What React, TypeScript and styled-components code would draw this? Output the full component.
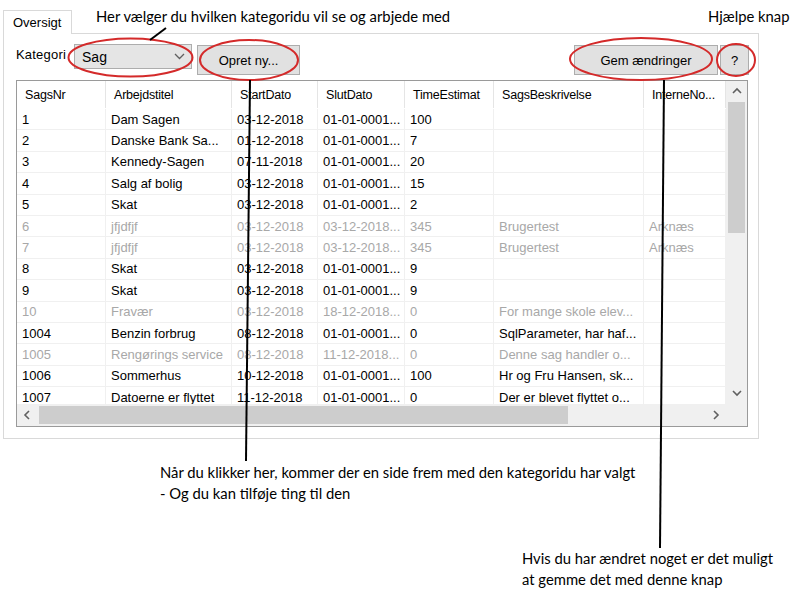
import React from 'react';
import styled, { createGlobalStyle } from 'styled-components';

const GlobalStyle = createGlobalStyle`
  html, body {
    margin: 0;
    padding: 0;
    background: #ffffff;
  }
  * {
    box-sizing: border-box;
  }
`;

// kolonnebredder i griddet
const COLS = [89, 126, 86, 87, 89, 150, 82];
const ROW_H = 21.4;

type SagRow = {
  nr: string;
  titel: string;
  start: string;
  slut: string;
  estimat: string;
  beskrivelse: string;
  noter: string;
  lukket?: boolean;
};

const headers = ['SagsNr', 'Arbejdstitel', 'StartDato', 'SlutDato', 'TimeEstimat', 'SagsBeskrivelse', 'InterneNo...'];

const rows: SagRow[] = [
  { nr: '1', titel: 'Dam Sagen', start: '03-12-2018', slut: '01-01-0001...', estimat: '100', beskrivelse: '', noter: '' },
  { nr: '2', titel: 'Danske Bank Sa...', start: '01-12-2018', slut: '01-01-0001...', estimat: '7', beskrivelse: '', noter: '' },
  { nr: '3', titel: 'Kennedy-Sagen', start: '07-11-2018', slut: '01-01-0001...', estimat: '20', beskrivelse: '', noter: '' },
  { nr: '4', titel: 'Salg af bolig', start: '03-12-2018', slut: '01-01-0001...', estimat: '15', beskrivelse: '', noter: '' },
  { nr: '5', titel: 'Skat', start: '03-12-2018', slut: '01-01-0001...', estimat: '2', beskrivelse: '', noter: '' },
  { nr: '6', titel: 'jfjdfjf', start: '03-12-2018', slut: '03-12-2018...', estimat: '345', beskrivelse: 'Brugertest', noter: 'Arknæs', lukket: true },
  { nr: '7', titel: 'jfjdfjf', start: '03-12-2018', slut: '03-12-2018...', estimat: '345', beskrivelse: 'Brugertest', noter: 'Arknæs', lukket: true },
  { nr: '8', titel: 'Skat', start: '03-12-2018', slut: '01-01-0001...', estimat: '9', beskrivelse: '', noter: '' },
  { nr: '9', titel: 'Skat', start: '03-12-2018', slut: '01-01-0001...', estimat: '9', beskrivelse: '', noter: '' },
  { nr: '10', titel: 'Fravær', start: '03-12-2018', slut: '18-12-2018...', estimat: '0', beskrivelse: 'For mange skole elev...', noter: '', lukket: true },
  { nr: '1004', titel: 'Benzin forbrug', start: '08-12-2018', slut: '01-01-0001...', estimat: '0', beskrivelse: 'SqlParameter, har haf...', noter: '' },
  { nr: '1005', titel: 'Rengørings service', start: '08-12-2018', slut: '11-12-2018...', estimat: '0', beskrivelse: 'Denne sag handler o...', noter: '', lukket: true },
  { nr: '1006', titel: 'Sommerhus', start: '10-12-2018', slut: '01-01-0001...', estimat: '100', beskrivelse: 'Hr og Fru Hansen, sk...', noter: '' },
  { nr: '1007', titel: 'Datoerne er flyttet', start: '11-12-2018', slut: '01-01-0001...', estimat: '0', beskrivelse: 'Der er blevet flyttet o...', noter: '' },
];

const Chevron = ({ dir }: { dir: 'up' | 'down' | 'left' | 'right' }) => {
  const pts = {
    up: '1,6 5,2 9,6',
    down: '1,2 5,6 9,2',
    left: '6,1 2,5 6,9',
    right: '3,1 7,5 3,9',
  }[dir];
  return (
    <svg width='10' height='10' viewBox='0 0 10 10'>
      <polyline points={pts} fill='none' stroke='#606060' strokeWidth='1.6' />
    </svg>
  );
};

const App = () => {
  return (
    <Canvas>
      <GlobalStyle />
      <TabControl>
        <TabStrip>
          <Tab>Oversigt</Tab>
        </TabStrip>
        <TabPage>
          <Toolbar>
            <Label>Kategori</Label>
            <Combo>
              <span>Sag</span>
              <svg width='11' height='7' viewBox='0 0 11 7'>
                <polyline points='1,1 5.5,5.5 10,1' fill='none' stroke='#606060' strokeWidth='1.3' />
              </svg>
            </Combo>
            <Button $width={103}>Opret ny...</Button>
            <Spacer />
            <Button $width={144}>Gem ændringer</Button>
            <Button $width={29}>?</Button>
          </Toolbar>

          <Grid>
            <DataArea>
              <Row $header>
                {headers.map((h) => (
                  <HeaderCell key={h}>{h}</HeaderCell>
                ))}
              </Row>
              {rows.map((r) => (
                <Row key={r.nr}>
                  {[r.nr, r.titel, r.start, r.slut, r.estimat, r.beskrivelse, r.noter].map((v, i) => (
                    <Cell key={i} $muted={r.lukket}>
                      {v}
                    </Cell>
                  ))}
                </Row>
              ))}
            </DataArea>

            <VScroll>
              <ArrowBtn>
                <Chevron dir='up' />
              </ArrowBtn>
              <VTrack>
                <VThumb />
              </VTrack>
              <ArrowBtn>
                <Chevron dir='down' />
              </ArrowBtn>
            </VScroll>

            <HScroll>
              <ArrowBtn>
                <Chevron dir='left' />
              </ArrowBtn>
              <HTrack>
                <HThumb />
              </HTrack>
              <ArrowBtn>
                <Chevron dir='right' />
              </ArrowBtn>
            </HScroll>
            <Corner />
          </Grid>
        </TabPage>
      </TabControl>

      {/* forklaringer lagt oven på skærmbilledet */}
      <Note $x={96} $y={6}>Her vælger du hvilken kategoridu vil se og arbjede med</Note>
      <Note $x={708} $y={6}>Hjælpe knap</Note>
      <Note $x={160} $y={462}>
        Når du klikker her, kommer der en side frem med den kategoridu har valgt
        <br />- Og du kan tilføje ting til den
      </Note>
      <Note $x={522} $y={548}>
        Hvis du har ændret noget er det muligt
        <br />
        at gemme det med denne knap
      </Note>

      <Overlay width='800' height='600' viewBox='0 0 800 600'>
        <g fill='none' stroke='#d42a2a' strokeWidth='2'>
          <ellipse cx='130.5' cy='57.5' rx='62' ry='19' />
          <ellipse cx='249' cy='60' rx='49' ry='20' />
          <ellipse cx='641' cy='59' rx='71' ry='21' />
          <ellipse cx='736' cy='60' rx='19' ry='16' />
        </g>
        <g stroke='#000' strokeWidth='2'>
          <line x1='166' y1='28' x2='150' y2='40' />
          <line x1='250' y1='80' x2='246' y2='461' />
          <line x1='664' y1='80' x2='660' y2='548' />
        </g>
      </Overlay>
    </Canvas>
  );
};
export default App;

const Canvas = styled.div`
  position: relative;
  width: 800px;
  height: 600px;
  overflow: hidden;
  background: #ffffff;
  font-family: 'Liberation Sans', Arial, sans-serif;
`;

const TabControl = styled.div`
  display: flex;
  flex-direction: column;
  width: 756px;
  margin: 10px 0 0 3px;
`;

const TabStrip = styled.div`
  display: flex;
  height: 23px;
`;

const Tab = styled.div`
  width: 69px;
  height: 24px;
  padding: 4px 0 0 9px;
  border: 1px solid #d9d9d9;
  border-bottom: none;
  background: #ffffff;
  font-size: 13px;
  color: #000;
  position: relative;
  z-index: 1;
`;

const TabPage = styled.div`
  display: flex;
  flex-direction: column;
  height: 406px;
  padding: 10px 9px 0 12px;
  border: 1px solid #d9d9d9;
  background: #ffffff;
`;

// værktøjslinje med kategori og knapper
const Toolbar = styled.div`
  display: flex;
  align-items: flex-start;
  height: 30px;
`;

const Label = styled.div`
  margin-top: 3px;
  font-size: 13px;
  letter-spacing: 0.2px;
  color: #000;
`;

const Combo = styled.div`
  display: flex;
  align-items: center;
  justify-content: space-between;
  width: 118px;
  height: 25px;
  margin-left: 8px;
  padding: 0 6px 0 7px;
  border: 1px solid #adadad;
  background: #e5e5e5;
  font-size: 14px;
  color: #000;
`;

const Button = styled.div<{ $width: number }>`
  display: flex;
  align-items: center;
  justify-content: center;
  width: ${(p) => p.$width}px;
  height: 30px;
  margin-left: 5px;
  margin-top: 1px;
  border: 1px solid #adadad;
  background: #e1e1e1;
  font-size: 13px;
  color: #000;
  & + & {
    margin-left: 2px;
  }
`;

const Spacer = styled.div`
  flex: 1;
`;

const Grid = styled.div`
  display: grid;
  grid-template-columns: 709px 21px;
  grid-template-rows: 323px 22px;
  width: 732px;
  height: 347px;
  margin-top: 6px;
  border: 1px solid #9a9a9a;
  background: #ffffff;
`;

const DataArea = styled.div`
  overflow: hidden;
  background: #ffffff;
`;

const Row = styled.div<{ $header?: boolean }>`
  display: grid;
  grid-template-columns: ${COLS.map((c) => c + 'px').join(' ')};
  height: ${(p) => (p.$header ? '28px' : ROW_H + 'px')};
  border-bottom: 1px solid ${(p) => (p.$header ? '#ffffff' : '#f0f0f0')};
`;

const HeaderCell = styled.div`
  display: flex;
  align-items: center;
  padding-left: 8px;
  border-right: 1px solid #e5e5e5;
  font-size: 12.5px;
  letter-spacing: -0.2px;
  color: #000;
  white-space: nowrap;
  overflow: hidden;
`;

const Cell = styled.div<{ $muted?: boolean }>`
  display: flex;
  align-items: center;
  padding-left: 5px;
  border-right: 1px solid #f0f0f0;
  font-size: 13px;
  color: ${(p) => (p.$muted ? '#a8a8a8' : '#000')};
  white-space: nowrap;
  overflow: hidden;
`;

const VScroll = styled.div`
  display: flex;
  flex-direction: column;
  background: #f0f0f0;
`;

const HScroll = styled.div`
  display: flex;
  background: #f0f0f0;
`;

const ArrowBtn = styled.div`
  display: flex;
  align-items: center;
  justify-content: center;
  flex: 0 0 21px;
  height: 21px;
  width: 21px;
`;

const VTrack = styled.div`
  flex: 1;
  padding: 0 2px;
`;

const VThumb = styled.div`
  height: 131px;
  background: #cdcdcd;
`;

const HTrack = styled.div`
  flex: 1;
  padding: 2px 0;
`;

const HThumb = styled.div`
  width: 529px;
  height: 100%;
  margin-left: 1px;
  background: #cdcdcd;
`;

const Corner = styled.div`
  background: #f0f0f0;
`;

// forklarende tekst
const Note = styled.div<{ $x: number; $y: number }>`
  position: absolute;
  left: ${(p) => p.$x}px;
  top: ${(p) => p.$y}px;
  font-family: Lato, 'Open Sans', sans-serif;
  font-size: 14.8px;
  line-height: 21px;
  color: #000;
  white-space: nowrap;
`;

const Overlay = styled.svg`
  position: absolute;
  left: 0;
  top: 0;
  pointer-events: none;
`;
